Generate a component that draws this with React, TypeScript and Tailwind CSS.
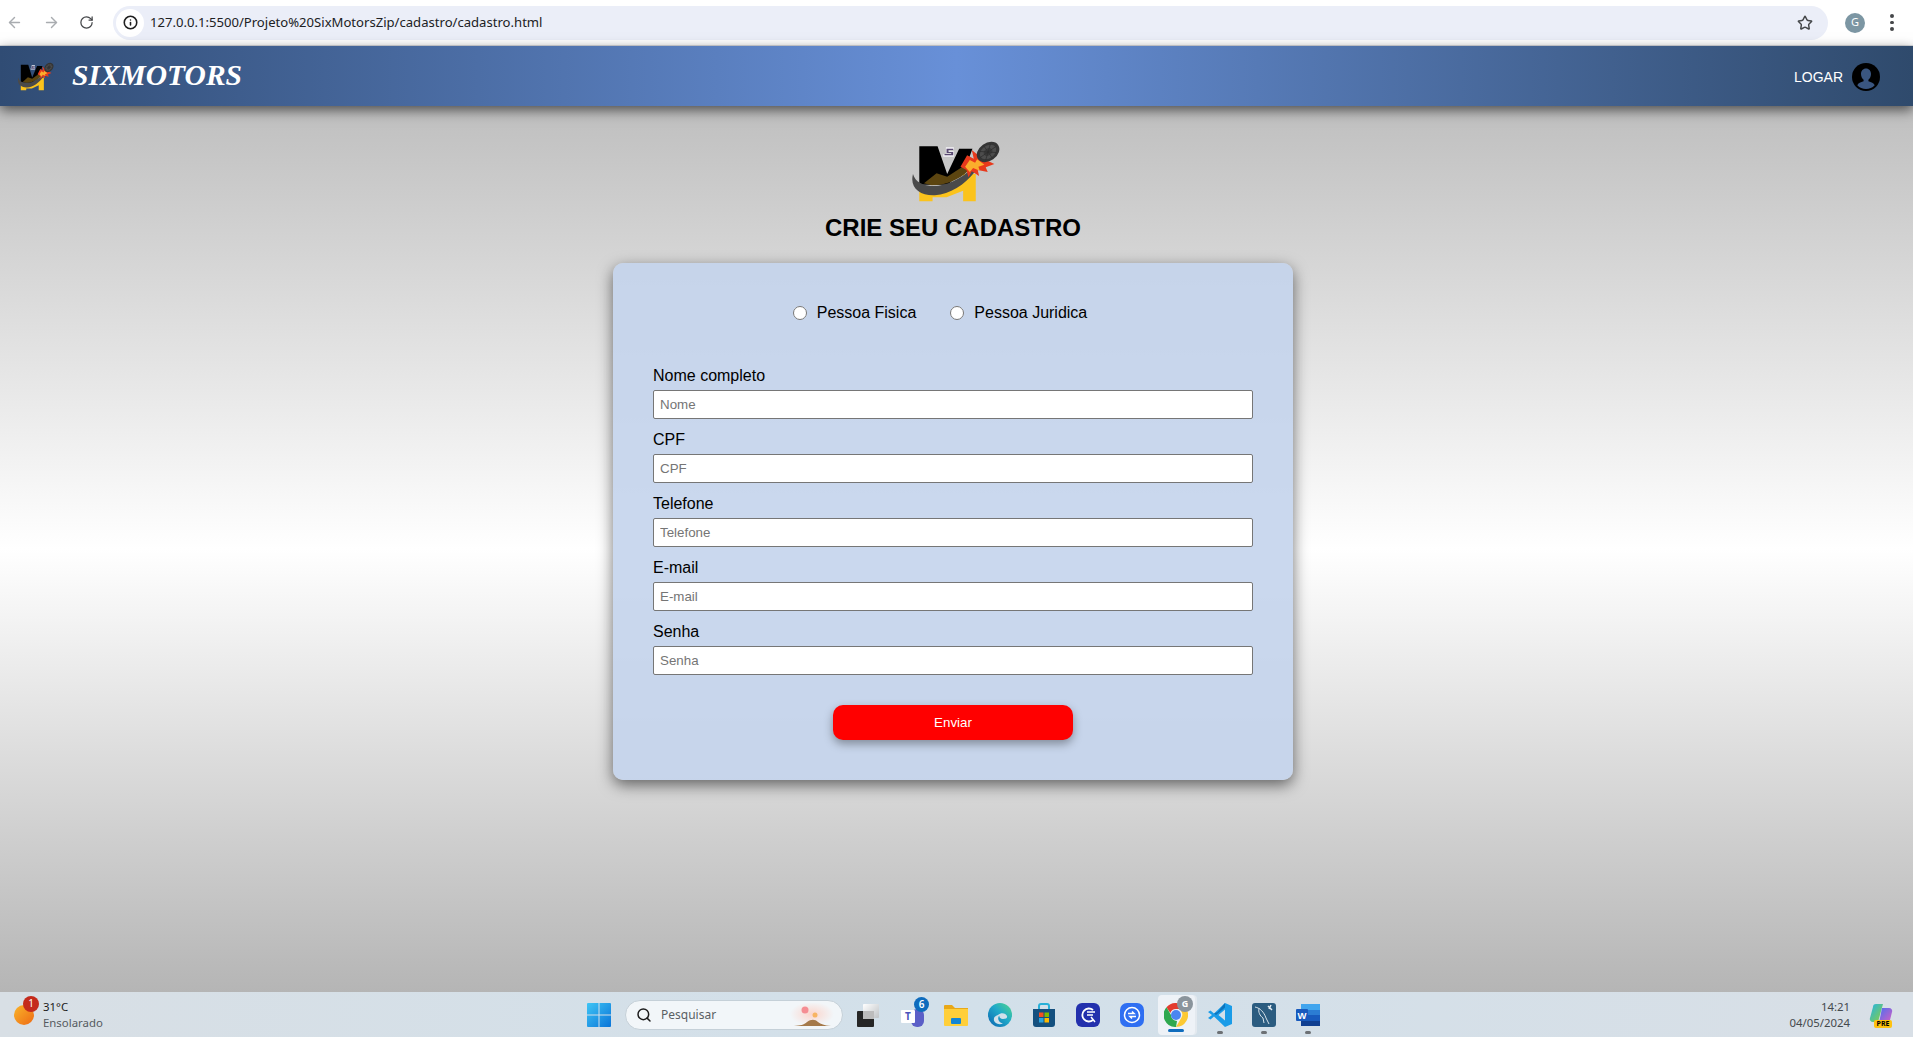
import { ArrowLeft, ArrowRight, RotateCw, Info, Star, Search } from 'lucide-react'

const FIELDS = [
  { label: 'Nome completo', placeholder: 'Nome' },
  { label: 'CPF', placeholder: 'CPF' },
  { label: 'Telefone', placeholder: 'Telefone' },
  { label: 'E-mail', placeholder: 'E-mail' },
  { label: 'Senha', placeholder: 'Senha' },
]

function Logo({ className }: { className: string }) {
  return (
    <svg viewBox="20 10 280 195" preserveAspectRatio="none" className={className}>
      <path d="M48 35H103L132 118L168 42H208L190 92L135 150H48Z" fill="#000" />
      <path d="M48 165H130L180 135V118H218V200H180V168L130 188H88V200H48Z" fill="#fbc31c" />
      <path d="M62 146L100 116L132 126L185 92L198 106C165 138 125 152 85 152Z" fill="#5c4510" />
      <path
        d="M29 118C18 160 50 184 95 182C140 179 185 150 215 112L203 104C172 134 125 156 85 154C58 152 36 142 29 118Z"
        fill="#4a4a4a"
      />
      <path d="M172 96L192 62L212 72L206 46L236 70L274 88L248 98L254 112L224 106L228 124L206 110L196 128L190 106Z" fill="#e8391c" />
      <path d="M186 96L200 76L216 84L222 74L244 90L226 96L230 108L210 100L200 112Z" fill="#fbae2c" />
      <g transform="rotate(-35 255 52)">
        <ellipse cx="255" cy="52" rx="37" ry="27" fill="#353535" />
        <ellipse cx="255" cy="52" rx="27" ry="19" fill="#4c4c4c" />
        <ellipse cx="255" cy="52" rx="14" ry="10" fill="#3a3a3a" />
        <path d="M225 52H285M255 28V76M235 36L275 68M275 36L235 68" stroke="#2c2c2c" strokeWidth="2" />
      </g>
      <path d="M128 38H152V45H135V50H152V66H120V59H145V56H128Z" fill="#f4f2f7" />
      <path d="M130 42H150V46H136V52H150V62H124V58H144V55H130Z" fill="#5a4a72" />
    </svg>
  )
}

function ChromeBar() {
  return (
    <div className="flex h-[46px] shrink-0 items-center border-b border-[#dcdee2] bg-white">
      <ArrowLeft className="ml-[6px] h-[17px] w-[17px] text-[#a9acb0]" />
      <ArrowRight className="ml-[20px] h-[17px] w-[17px] text-[#a9acb0]" />
      <RotateCw className="ml-[19px] h-[15px] w-[15px] text-[#45474a]" />
      <div className="ml-[19px] flex h-[34px] w-[1715px] items-center rounded-full bg-[#ebeef8] pl-[3px] pr-[15px]">
        <span className="flex h-[28px] w-[28px] items-center justify-center rounded-full bg-white">
          <Info className="h-[15px] w-[15px] text-[#1f1f1f]" strokeWidth={2.5} />
        </span>
        <span className="ml-[6px] text-[13.1px] text-[#202124] font-['Noto_Sans',sans-serif]">
          127.0.0.1:5500/Projeto%20SixMotorsZip/cadastro/cadastro.html
        </span>
        <Star className="ml-auto h-[16px] w-[16px] text-[#45474a]" strokeWidth={2.2} />
      </div>
      <span className="ml-[17px] flex h-[20px] w-[20px] items-center justify-center rounded-full bg-[#7c96a3] text-[11px] text-white font-['Noto_Sans',sans-serif]">
        G
      </span>
      <span className="ml-[25px] flex flex-col gap-[3px]">
        <span className="h-[3.5px] w-[3.5px] rounded-full bg-[#45474a]" />
        <span className="h-[3.5px] w-[3.5px] rounded-full bg-[#45474a]" />
        <span className="h-[3.5px] w-[3.5px] rounded-full bg-[#45474a]" />
      </span>
    </div>
  )
}

function SiteHeader() {
  return (
    <header className="relative z-10 flex h-[60px] shrink-0 items-center bg-[linear-gradient(to_right,#304c74,#6890d8_50%,#2f4a6c)] pl-[17px] pr-[33px] shadow-[0_4px_12px_rgba(0,0,0,0.6)]">
      <Logo className="h-[30px] w-[38px]" />
      <span className="ml-[17px] text-[29.5px] font-bold italic leading-none text-white font-['Liberation_Serif',serif]">
        SIXMOTORS
      </span>
      <span className="ml-auto mt-[3px] text-[14px] text-white">LOGAR</span>
      <svg viewBox="0 0 28 28" className="ml-[9px] mt-[1px] h-[28px] w-[28px]">
        <circle cx="14" cy="14" r="14" fill="#000" />
        <path
          d="M14 5.5c3 0 5 2.4 5 5.6 0 2.6-1.2 4.6-2.6 5.7v1.5c2.7.9 5.5 2 6.3 3.9A12 12 0 0 1 14 26a12 12 0 0 1-8.7-3.8c.8-1.900 3.600-3 6.300-3.900v-1.500C10.200 15.700 9 13.700 9 11.100c0-3.200 2-5.600 5-5.600Z"
          fill="#3a5680"
        />
      </svg>
    </header>
  )
}

function SignupForm() {
  return (
    <form className="mt-[21px] flex h-[517px] w-[680px] flex-col rounded-[10px] bg-[#c4d4ec]/90 px-[40px] pt-[41px] shadow-[0_5px_15px_rgba(0,0,0,0.55)]">
      <div className="flex h-[18px] items-center justify-center pr-[26px] text-[16px] text-black">
        <input type="radio" name="pessoa" className="h-[14px] w-[14px]" />
        <span className="ml-[10px]">Pessoa Fisica</span>
        <input type="radio" name="pessoa" className="ml-[34px] h-[14px] w-[14px]" />
        <span className="ml-[10px]">Pessoa Juridica</span>
      </div>
      <div className="mt-[44px] flex flex-col gap-[11px]">
        {FIELDS.map((field) => (
          <label key={field.label} className="flex flex-col gap-[5px]">
            <span className="pt-[1px] text-[16px] leading-[18px] text-black">{field.label}</span>
            <input
              type="text"
              placeholder={field.placeholder}
              className="h-[29px] rounded-[2px] border border-[#767676] bg-white px-[6px] text-[13.33px] text-black placeholder:text-[#757575]"
            />
          </label>
        ))}
      </div>
      <button
        type="button"
        className="mx-auto mt-[30px] h-[35px] w-[240px] rounded-[10px] bg-[#ff0000] text-[13.33px] text-white shadow-[0_4px_10px_rgba(0,0,0,0.35)]"
      >
        Enviar
      </button>
    </form>
  )
}

function TaskIcon({ children, active }: { children: React.ReactNode; active?: boolean }) {
  return (
    <div className="relative flex h-[40px] w-[44px] shrink-0 items-center justify-center">
      {active ? <div className="absolute left-[4px] top-0 h-[40px] w-[37px] rounded-[4px] bg-[#eef2f7] shadow-[2px_0_0_#e3e9ef]" /> : null}
      <div className="relative flex h-[24px] w-[24px] items-center justify-center">{children}</div>
    </div>
  )
}

function OpenDot() {
  return <span className="absolute top-[36px] left-1/2 h-[3px] w-[6px] -translate-x-1/2 rounded-full bg-[#6c7074]" />
}

function Taskbar() {
  return (
    <footer className="flex h-[45px] shrink-0 items-center bg-[linear-gradient(to_right,#d8dfe5,#d2e0ea_50%,#d8dfe6)] font-['Noto_Sans',sans-serif]">
      <div className="flex w-[577px] shrink-0 items-center">
        <div className="relative ml-[14px] h-[20px] w-[20px] rounded-full bg-[linear-gradient(135deg,#f9b52a,#ee6a14)]">
          <span className="absolute left-[9px] top-[-9px] flex h-[16px] w-[16px] items-center justify-center rounded-full bg-[#c42b1c] text-[10px] text-white">
            1
          </span>
        </div>
        <div className="ml-[9px] flex flex-col text-[11.4px] leading-[16px]">
          <span className="text-[#1b1b1b]">31°C</span>
          <span className="text-[#555a60]">Ensolarado</span>
        </div>
      </div>

      <div className="flex items-center">
        <TaskIcon>
          <svg viewBox="0 0 24 24" className="h-[24px] w-[24px]">
            <defs>
              <linearGradient id="win" x1="0" y1="0" x2="1" y2="1">
                <stop offset="0" stopColor="#3fc5f5" />
                <stop offset="1" stopColor="#0a74d8" />
              </linearGradient>
            </defs>
            <path d="M0 1a1 1 0 0 1 1-1h10.500v11.500H0ZM12.500 0H23a1 1 0 0 1 1 1v10.500H12.500ZM0 12.500h11.500V24H1a1 1 0 0 1-1-1ZM12.500 12.500H24V23a1 1 0 0 1-1 1H12.500Z" fill="url(#win)" />
          </svg>
        </TaskIcon>
        <div className="ml-[4px] mr-[3px] flex h-[30px] w-[218px] shrink-0 items-center rounded-full border border-[#c5d0d8] bg-[#f2f6f9] pl-[10px]">
          <Search className="h-[16px] w-[16px] text-[#1c1c1c]" strokeWidth={2.2} />
          <span className="ml-[9px] text-[12px] text-[#5a5f64]">Pesquisar</span>
          <svg viewBox="0 0 44 24" className="ml-auto mr-[8px] h-[24px] w-[44px]">
            <defs>
              <radialGradient id="dune-sky">
                <stop offset="0" stopColor="#fbd5cc" />
                <stop offset="1" stopColor="#f2f6f9" />
              </radialGradient>
            </defs>
            <ellipse cx="22" cy="11" rx="22" ry="12" fill="url(#dune-sky)" />
            <circle cx="15" cy="7" r="3.500" fill="#f58d93" />
            <circle cx="25" cy="12" r="2.500" fill="#f7b463" />
            <path d="M4 23c6-.5 10-1 13-4 4-3 8-3 11 0 3 2 6 3.500 13 4Z" fill="#a5794a" />
          </svg>
        </div>
        <TaskIcon>
          <span className="absolute left-[7px] top-[1px] h-[14px] w-[16px] rounded-[1px] bg-[linear-gradient(135deg,#ffffff,#bfc3c6)]" />
          <span className="absolute left-[1px] top-[8px] h-[16px] w-[17px] rounded-[1px] bg-[#262626]" />
          <span className="absolute left-[7px] top-[8px] h-[8px] w-[11px] bg-[#bcbcbc]" />
        </TaskIcon>
        <TaskIcon>
          <span className="absolute left-[11px] top-[6px] h-[18px] w-[13px] rounded-[6px] bg-[#5b5fc7]" />
          <span className="absolute left-[1px] top-[7px] flex h-[13px] w-[14px] items-center justify-center rounded-[1px] bg-white text-[10px] font-bold leading-none text-[#4b53bc]">
            T
          </span>
          <span className="absolute left-[14px] top-[-6px] flex h-[15px] w-[15px] items-center justify-center rounded-full bg-[#0f6cbd] text-[10px] font-semibold text-white">
            6
          </span>
        </TaskIcon>
        <TaskIcon>
          <svg viewBox="0 0 24 24" className="h-[24px] w-[24px]">
            <path d="M0 3a1 1 0 0 1 1-1h7l3 3h13v3H0Z" fill="#e8a818" />
            <path d="M0 6h24v16a1 1 0 0 1-1 1H1a1 1 0 0 1-1-1Z" fill="#ffcf3a" />
            <rect x="7" y="15" width="10" height="6" rx="1" fill="#1486d4" />
          </svg>
        </TaskIcon>
        <TaskIcon>
          <svg viewBox="0 0 24 24" className="h-[24px] w-[24px]">
            <defs>
              <linearGradient id="edge" x1="1" y1="0" x2="0" y2="1">
                <stop offset="0" stopColor="#52d88a" />
                <stop offset="0.45" stopColor="#1fa9c9" />
                <stop offset="1" stopColor="#0c63b0" />
              </linearGradient>
            </defs>
            <circle cx="12" cy="12" r="12" fill="url(#edge)" />
            <path d="M10 12c3-3 8-2 9 1 .6 2-1 3-4 3-3 0-4-2-3.500-3.500-2.500 2-1.500 7 3.500 8-5 2-10-1-9-5 0-1.500 2-3 4-3.500Z" fill="#d2e0ea" />
          </svg>
        </TaskIcon>
        <TaskIcon>
          <svg viewBox="0 0 24 24" className="h-[24px] w-[24px]">
            <path d="M7 6V3a2 2 0 0 1 2-2h6a2 2 0 0 1 2 2v3" fill="none" stroke="#28b0d8" strokeWidth="2" />
            <path d="M1 6h22v15a3 3 0 0 1-3 3H4a3 3 0 0 1-3-3Z" fill="#14507f" />
            <rect x="7" y="9.500" width="4.500" height="4.500" fill="#f25022" />
            <rect x="12.500" y="9.500" width="4.500" height="4.500" fill="#7fba00" />
            <rect x="7" y="15" width="4.500" height="4.500" fill="#2aa5e0" />
            <rect x="12.500" y="15" width="4.500" height="4.500" fill="#ffb900" />
          </svg>
        </TaskIcon>
        <TaskIcon>
          <svg viewBox="0 0 24 24" className="h-[24px] w-[24px]">
            <rect width="24" height="24" rx="6" fill="#2330ad" />
            <path d="M17 7a6.500 6.500 0 1 0 0 10" fill="none" stroke="#fff" strokeWidth="1.800" />
            <path d="M11 9h8M11 12h6M15 14l4 5" fill="none" stroke="#fff" strokeWidth="1.500" />
          </svg>
        </TaskIcon>
        <TaskIcon>
          <svg viewBox="0 0 24 24" className="h-[24px] w-[24px]">
            <rect width="24" height="24" rx="7" fill="#2f6ff2" />
            <circle cx="12" cy="12" r="7.500" fill="none" stroke="#fff" strokeWidth="1.500" />
            <path d="M8 10.500h6l-2-2M16 13.500h-6l2 2" fill="none" stroke="#fff" strokeWidth="1.500" />
          </svg>
        </TaskIcon>
        <TaskIcon active>
          <svg viewBox="0 0 24 24" className="h-[24px] w-[24px]">
            <path d="M12 0a12 12 0 0 1 10.400 6H12a6 6 0 0 0-5.700 4L2.500 4.200A12 12 0 0 1 12 0Z" fill="#e33b2e" />
            <path d="M22.400 6A12 12 0 0 1 12 24l5.200-9A6 6 0 0 0 17 8l5.400-2Z" fill="#fcc934" />
            <path d="M12 24A12 12 0 0 1 2.500 4.200L7 12a6 6 0 0 0 6 5.900Z" fill="#2fa84f" />
            <circle cx="12" cy="12" r="5" fill="#4a86f0" />
          </svg>
          <span className="absolute left-[13px] top-[-7px] flex h-[16px] w-[16px] items-center justify-center rounded-full bg-[#8a949c] text-[9px] font-bold text-white">
            G
          </span>
          <span className="absolute left-[4px] top-[26px] h-[3px] w-[16px] rounded-full bg-[#0f6cbd]" />
        </TaskIcon>
        <div className="relative">
          <TaskIcon>
            <svg viewBox="0 0 24 24" className="h-[24px] w-[24px]">
              <path d="M17 0l7 3v18l-7 3L6 13.500l-3.500 3L0 15l4-3-4-3 2.500-1.500 3.500 3ZM17 6.500L10.500 12l6.500 5.500Z" fill="#1a9ce8" />
              <path d="M17 0l-7.500 9 0 0L6 10.500l2 1.500 9-7.500Z" fill="#0e74bc" />
            </svg>
          </TaskIcon>
          <OpenDot />
        </div>
        <div className="relative">
          <TaskIcon>
            <svg viewBox="0 0 24 24" className="h-[24px] w-[24px]">
              <rect width="24" height="24" rx="3" fill="#2b5c80" />
              <path d="M3 4c5 1 9 5 11 11l3 6M7 5c-1 4 1 8 4 10l1 5" fill="none" stroke="#d6e2ea" strokeWidth="1" />
              <path d="M16 3l4 4M19 2l-2 4" fill="none" stroke="#e6edf2" strokeWidth="1.500" />
            </svg>
          </TaskIcon>
          <OpenDot />
        </div>
        <div className="relative">
          <TaskIcon>
            <svg viewBox="0 0 24 24" className="h-[24px] w-[24px]">
              <rect x="5" y="1" width="19" height="22" rx="1.500" fill="#2b7cd3" />
              <rect x="5" y="1" width="19" height="6" fill="#41a5ee" />
              <rect x="5" y="12" width="19" height="6" fill="#185abd" />
              <rect x="5" y="18" width="19" height="5" fill="#103f91" />
              <rect x="0" y="6" width="12" height="12" rx="1" fill="#185abd" />
              <text x="6" y="15.500" textAnchor="middle" fontSize="9.500" fontWeight="700" fill="#fff" fontFamily="Liberation Sans, sans-serif">W</text>
            </svg>
          </TaskIcon>
          <OpenDot />
        </div>
      </div>

      <div className="ml-auto flex items-center">
        <div className="flex flex-col items-end text-[11.4px] leading-[16px] text-[#45494d]">
          <span>14:21</span>
          <span>04/05/2024</span>
        </div>
        <div className="relative ml-[19px] mr-[20px] h-[24px] w-[24px]">
          <svg viewBox="0 0 24 24" className="h-[24px] w-[24px]">
            <defs>
              <linearGradient id="copilot-a" x1="0" y1="0" x2="1" y2="1">
                <stop offset="0" stopColor="#22b4e8" />
                <stop offset="1" stopColor="#8fcf3a" />
              </linearGradient>
              <linearGradient id="copilot-b" x1="0" y1="0" x2="1" y2="1">
                <stop offset="0" stopColor="#4b6ff0" />
                <stop offset="1" stopColor="#d95fc2" />
              </linearGradient>
            </defs>
            <path d="M7 1h7l-5 18H4a3 3 0 0 1-3-4l3-11a3 3 0 0 1 3-3Z" fill="url(#copilot-a)" />
            <path d="M13 5h7a3 3 0 0 1 3 4l-2 8a4 4 0 0 1-4 3h-7Z" fill="url(#copilot-b)" />
          </svg>
          <span className="absolute left-[5px] top-[17px] flex h-[8px] w-[18px] items-center justify-center rounded-[2px] bg-[#ffc20e] text-[7px] font-bold leading-none text-black">
            PRE
          </span>
        </div>
      </div>
    </footer>
  )
}

export default function App() {
  return (
    <div className="flex h-screen flex-col overflow-hidden font-['Liberation_Sans',Arial,sans-serif]">
      <ChromeBar />
      <SiteHeader />
      <main className="flex min-h-0 flex-1 flex-col items-center bg-[linear-gradient(to_bottom,#bfbfbf,#ffffff_50%,#b5b5b5)] pr-[7px] pt-[32px]">
        <Logo className="ml-[7px] h-[65px] w-[93px]" />
        <h1 className="mt-[11px] text-[24px] font-bold leading-[28px] text-black">CRIE SEU CADASTRO</h1>
        <SignupForm />
      </main>
      <Taskbar />
    </div>
  )
}
